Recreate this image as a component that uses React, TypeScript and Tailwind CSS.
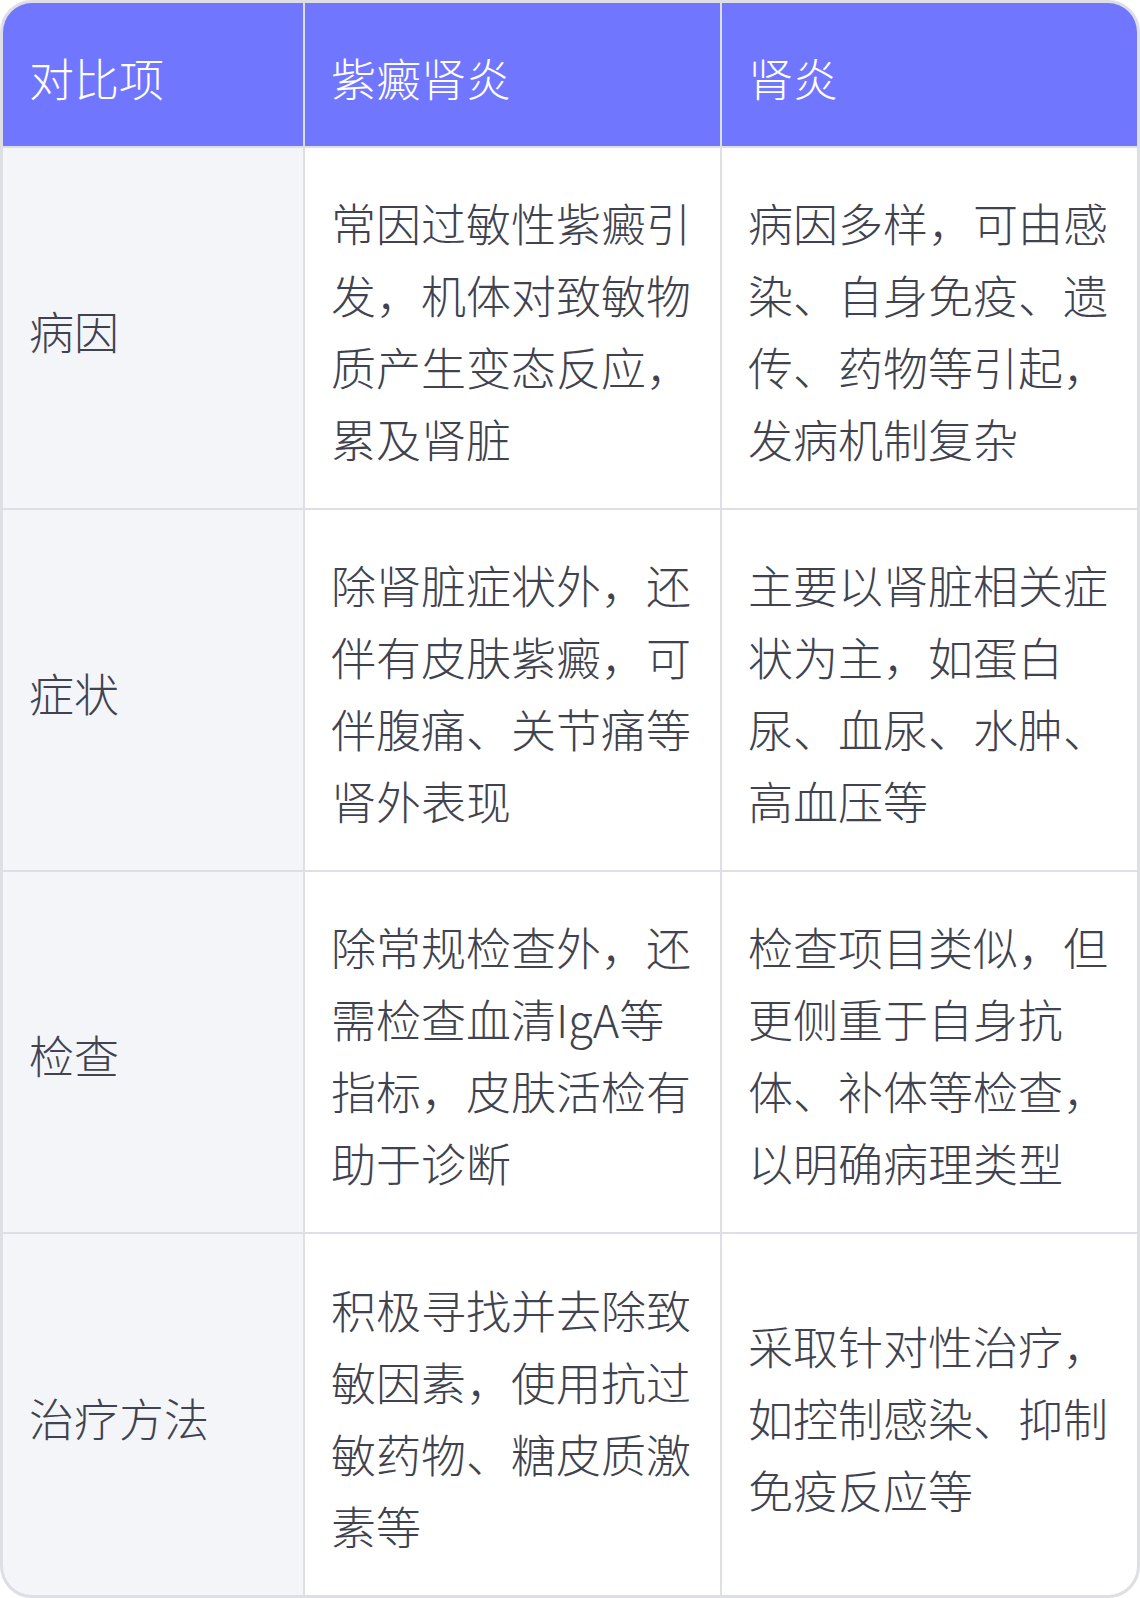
import React from "react";

const rows: [string, string, string][] = [
  [
    "病因",
    "常因过敏性紫癜引发，机体对致敏物质产生变态反应，累及肾脏",
    "病因多样，可由感染、自身免疫、遗传、药物等引起，发病机制复杂",
  ],
  [
    "症状",
    "除肾脏症状外，还伴有皮肤紫癜，可伴腹痛、关节痛等肾外表现",
    "主要以肾脏相关症状为主，如蛋白尿、血尿、水肿、高血压等",
  ],
  [
    "检查",
    "除常规检查外，还需检查血清IgA等指标，皮肤活检有助于诊断",
    "检查项目类似，但更侧重于自身抗体、补体等检查，以明确病理类型",
  ],
  [
    "治疗方法",
    "积极寻找并去除致敏因素，使用抗过敏药物、糖皮质激素等",
    "采取针对性治疗，如控制感染、抑制免疫反应等",
  ],
];

export default function App() {
  return (
    <div
      className="w-[1140px] h-[1598px] bg-white"
      style={{ fontFamily: '"Noto Sans CJK SC", "Noto Sans", sans-serif' }}
    >
      <div className="w-[1140px] h-[1598px] rounded-[32px] border-[3px] border-[#dedfe5] overflow-hidden bg-[#dedfe5] grid grid-cols-[300px_415px_415px] grid-rows-[143px_360px_360px_360px_361px] gap-[2px] text-[45px] leading-[1.6] font-light">
        {["对比项", "紫癜肾炎", "肾炎"].map((h) => (
          <div key={h} className="bg-[#7176ff] text-white flex items-center pl-[26px] pt-[6px]">
            {h}
          </div>
        ))}
        {rows.map((r) => (
          <React.Fragment key={r[0]}>
            <div className="bg-[#f4f5f9] text-[#40434f] flex items-center pl-[26px] pt-[6px]">
              {r[0]}
            </div>
            <div className="bg-white text-[#40434f] flex items-center pl-[26px] pr-[26px] pt-[6px]">
              <div>{r[1]}</div>
            </div>
            <div className="bg-white text-[#40434f] flex items-center pl-[26px] pr-[26px] pt-[6px]">
              <div>{r[2]}</div>
            </div>
          </React.Fragment>
        ))}
      </div>
    </div>
  );
}
